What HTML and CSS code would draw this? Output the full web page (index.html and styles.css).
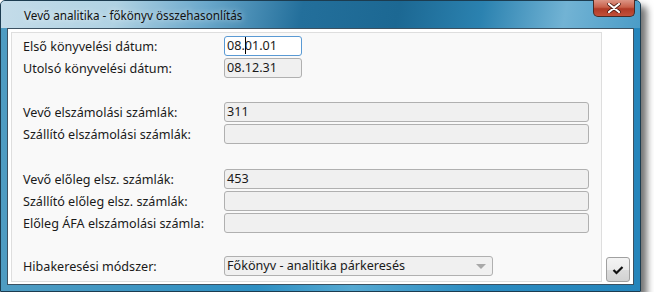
FILE: index.html
```html
<!DOCTYPE html>
<html lang="hu">
<head>
    <meta charset="UTF-8">
    <title>Vevő analitika - főkönyv összehasonlítás</title>
    <link rel="stylesheet" href="styles.css">
</head>
<body>
    <div class="window">
        <div class="titlebar">
            <span class="title">Vevő analitika - főkönyv összehasonlítás</span>
            <button class="close" title="Bezárás">
                <svg width="14" height="10" viewBox="0 0 14 10">
                    <path d="M2 1 L12 9 M12 1 L2 9" stroke="#4a1a12" stroke-width="3.6" stroke-linecap="round"/>
                    <path d="M2 1 L12 9 M12 1 L2 9" stroke="#ffffff" stroke-width="2.2" stroke-linecap="round"/>
                </svg>
            </button>
        </div>
        <div class="client">
            <div class="panel">
                <div class="group">
                    <div class="row">
                        <span class="label">Első könyvelési dátum:</span>
                        <div class="field date active">08.<span class="caret"></span>01.01</div>
                    </div>
                    <div class="row">
                        <span class="label">Utolsó könyvelési dátum:</span>
                        <div class="field date">08.12.31</div>
                    </div>
                </div>
                <div class="group gap-24">
                    <div class="row">
                        <span class="label">Vevő elszámolási számlák:</span>
                        <div class="field">311</div>
                    </div>
                    <div class="row">
                        <span class="label">Szállító elszámolási számlák:</span>
                        <div class="field"></div>
                    </div>
                </div>
                <div class="group gap-25">
                    <div class="row">
                        <span class="label">Vevő előleg elsz. számlák:</span>
                        <div class="field">453</div>
                    </div>
                    <div class="row">
                        <span class="label">Szállító előleg elsz. számlák:</span>
                        <div class="field"></div>
                    </div>
                    <div class="row">
                        <span class="label">Előleg ÁFA elszámolási számla:</span>
                        <div class="field"></div>
                    </div>
                </div>
                <div class="group gap-23">
                    <div class="row">
                        <span class="label">Hibakeresési módszer:</span>
                        <div class="field select">
                            <span>Főkönyv - analitika párkeresés</span>
                            <span class="arrow"></span>
                        </div>
                    </div>
                </div>
            </div>
            <div class="side">
                <button class="ok" title="OK">
                    <svg width="12" height="10" viewBox="0 0 12 10">
                        <path d="M1.5 5 L4.5 8 L10.5 2" fill="none" stroke="#111" stroke-width="2.2"/>
                    </svg>
                </button>
            </div>
        </div>
    </div>
</body>
</html>
```

FILE: styles.css
```css
body {
    margin: 0;
    background: #fff;
    font-family: 'Noto Sans', 'Open Sans', sans-serif;
    font-size: 12.6px;
    color: #1a1a1a;
}
.window {
    width: 641px;
    height: 292px;
    box-sizing: border-box;
    border: 1px solid #1c3c50;
    border-radius: 5px 5px 0 0;
    padding: 0 6px 6px;
    display: flex;
    flex-direction: column;
    background: linear-gradient(90deg, #4f9cc2 0%, #2e8fc2 40%, #55a9d2 55%, #2b8bc0 75%, #2585bb 100%);
    box-shadow: 6px 6px 7px rgba(0, 0, 0, 0.55);
}
.titlebar {
    height: 27px;
    margin: 0 -6px;
    padding-left: 23px;
    padding-right: 5px;
    display: flex;
    align-items: center;
    justify-content: space-between;
    background: linear-gradient(100deg, #c4dce9 0%, #b0d2e3 18%, #6aa8cb 32%, #236f9b 47%, #1c6893 62%, #2b82b0 75%, #72b3d4 88%, #4b9cc7 100%);
    border-radius: 4px 4px 0 0;
}
.title {
    color: #111;
    font-size: 11.7px;
    text-shadow: 0 0 6px rgba(255, 255, 255, 0.8);
}
.close {
    align-self: flex-start;
    width: 42px;
    height: 17px;
    margin-top: -1px;
    padding: 0;
    border: 1px solid #4a2a24;
    border-top: none;
    border-radius: 0 0 5px 5px;
    background: linear-gradient(#dc9585 0%, #c8604a 45%, #b03a26 55%, #c25039 100%);
    display: flex;
    align-items: center;
    justify-content: center;
}
.client {
    flex: 1;
    display: flex;
    align-items: flex-start;
    padding: 3px 0 1px 3px;
    background: #fff;
    border: 1px solid #3c5161;
}
.panel {
    width: 591px;
    height: 250px;
    box-sizing: border-box;
    padding: 3px 12px 0 11px;
    background: #f9f9f9;
    border: 1px solid #dedede;
}
.group {
    display: flex;
    flex-direction: column;
    gap: 2px;
}
.gap-24 { margin-top: 24px; }
.gap-25 { margin-top: 25px; }
.gap-23 { margin-top: 23px; }
.row {
    display: flex;
    align-items: center;
    height: 20px;
}
.label {
    width: 201px;
    flex-shrink: 0;
}
.field {
    flex: 1;
    height: 20px;
    box-sizing: border-box;
    padding-left: 2px;
    line-height: 18px;
    font-size: 12.6px;
    background: #f0f0f0;
    border: 1px solid #b0b0b0;
    border-radius: 3px;
    white-space: nowrap;
}
.field.date {
    flex: none;
    width: 78px;
}
.field.active {
    background: #fff;
    border-color: #5a9ad4;
}
.caret {
    display: inline-block;
    width: 1px;
    height: 17px;
    margin-right: -1px;
    vertical-align: top;
    background: #000;
}
.field.select {
    flex: none;
    width: 269px;
    display: flex;
    align-items: center;
    justify-content: space-between;
    padding-right: 6px;
}
.arrow {
    width: 0;
    height: 0;
    border-left: 5px solid transparent;
    border-right: 5px solid transparent;
    border-top: 5px solid #a8a8a8;
}
.side {
    flex: 1;
    align-self: stretch;
    display: flex;
    align-items: flex-end;
    padding-left: 4px;
}
.ok {
    width: 24px;
    height: 25px;
    margin-bottom: 1px;
    padding: 0;
    border: 1px solid #a0a0a0;
    border-radius: 3px;
    background: linear-gradient(#f4f4f4 0%, #ebebeb 50%, #dcdcdc 51%, #d2d2d2 100%);
    display: flex;
    align-items: center;
    justify-content: center;
}
```
